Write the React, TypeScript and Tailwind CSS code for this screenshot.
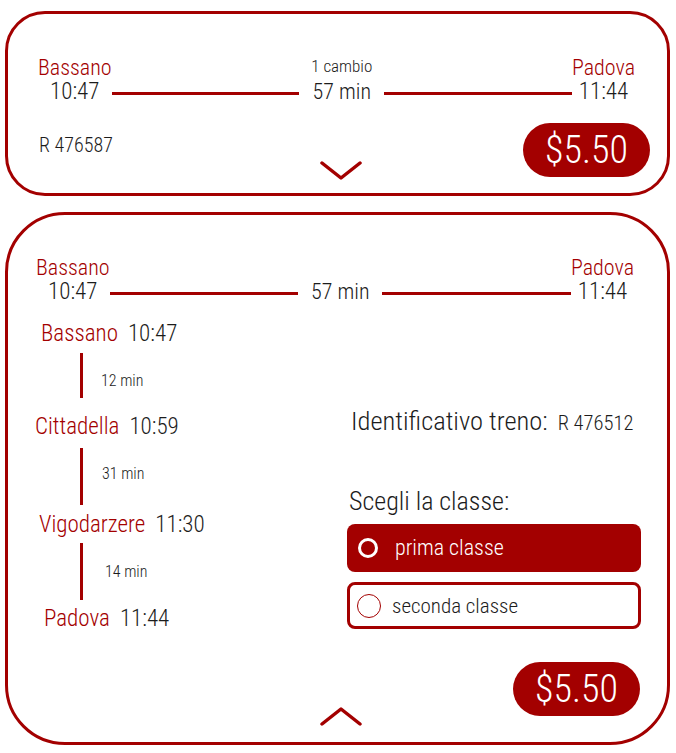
import React from 'react';

const stops = [
  { name: 'Bassano', time: '10:47', ml: 'ml-[33px]' },
  { name: 'Cittadella', time: '10:59', ml: 'ml-[27px]' },
  { name: 'Vigodarzere', time: '11:30', ml: 'ml-[31px]' },
  { name: 'Padova', time: '11:44', ml: 'ml-[36px]' },
];

const legs = [
  { label: '12 min', h: 'h-[69px]', lineTop: 'mt-[7px]', lineH: 'h-[45px]', labelMl: 'ml-[18px]' },
  { label: '31 min', h: 'h-[74px]', lineTop: 'mt-[9px]', lineH: 'h-[57px]', labelMl: 'ml-[19px]' },
  { label: '14 min', h: 'h-[70px]', lineTop: 'mt-[6px]', lineH: 'h-[57px]', labelMl: 'ml-[22px]' },
];

function Chevron({ up }: { up?: boolean }) {
  return (
    <svg width="44" height="20" viewBox="0 0 44 20" fill="none">
      <polyline
        points={up ? '3,18 22,3 41,18' : '3,2 22,17 41,2'}
        stroke="#a30000"
        strokeWidth="3.5"
        strokeLinecap="round"
        strokeLinejoin="round"
      />
    </svg>
  );
}

function Endpoint({ name, time }: { name: string; time: string }) {
  return (
    <div className="flex flex-col items-center">
      <span className="text-[22px] leading-[24px] text-[#a30000]">{name}</span>
      <span className="text-[23px] leading-[24px] text-[#1c1c1c]">{time}</span>
    </div>
  );
}

function Price() {
  return (
    <div className="w-[127px] h-[54px] rounded-full bg-[#a30000] flex items-center justify-center">
      <span className="text-[38px] leading-[44px] text-white">$5.50</span>
    </div>
  );
}

export default function App() {
  return (
    <div className="min-h-screen bg-white pt-[11px] pl-[5px] pr-[6px] font-['Roboto',sans-serif] font-[350] [font-stretch:75%] whitespace-nowrap">
      {/* riepilogo chiuso */}
      <div className="h-[185px] rounded-[40px] border-[3px] border-[#a30000] pt-[42px] pb-[12px] flex flex-col">
        <div className="flex items-end pl-[30px] pr-[32px]">
          <Endpoint name="Bassano" time="10:47" />
          <div className="flex-1 h-[3px] bg-[#a30000] mb-[9px]" />
          <div className="flex flex-col items-center mx-[12px]">
            <span className="text-[17px] leading-[20px] mb-[4px] text-[#1c1c1c]">1 cambio</span>
            <span className="text-[22px] leading-[24px] text-[#1c1c1c]">57 min</span>
          </div>
          <div className="flex-1 h-[3px] bg-[#a30000] mb-[9px]" />
          <Endpoint name="Padova" time="11:44" />
        </div>
        <div className="mt-auto grid grid-cols-[1fr_auto_1fr] h-[58px] pl-[31px] pr-[17px]">
          <span className="mt-[10px] text-[20px] leading-[24px] text-[#1c1c1c]">R 476587</span>
          <div className="self-end mr-[7px]">
            <Chevron />
          </div>
          <div className="justify-self-end">
            <Price />
          </div>
        </div>
      </div>

      {/* dettaglio aperto */}
      <div className="mt-[16px] h-[533px] rounded-[60px] border-[3px] border-[#a30000] pt-[41px] pb-[16px] flex flex-col">
        <div className="flex items-end pl-[28px] pr-[33px]">
          <Endpoint name="Bassano" time="10:47" />
          <div className="flex-1 h-[3px] bg-[#a30000] mb-[9px]" />
          <span className="mx-[13px] text-[22px] leading-[24px] text-[#1c1c1c]">57 min</span>
          <div className="flex-1 h-[3px] bg-[#a30000] mb-[9px]" />
          <Endpoint name="Padova" time="11:44" />
        </div>

        <div className="flex">
          <div className="w-[339px] pt-[18px] flex flex-col">
            {stops.map((s, i) => (
              <React.Fragment key={s.name}>
                <div className={`flex items-baseline gap-[10px] ${s.ml}`}>
                  <span className="text-[23px] leading-[24px] text-[#a30000]">{s.name}</span>
                  <span className="text-[23px] leading-[24px] text-[#1c1c1c]">{s.time}</span>
                </div>
                {legs[i] && (
                  <div className={`flex items-start ${legs[i].h}`}>
                    <div className={`ml-[72px] w-[3px] bg-[#a30000] ${legs[i].lineTop} ${legs[i].lineH}`} />
                    <span className={`mt-[25px] text-[16px] leading-[20px] text-[#1c1c1c] ${legs[i].labelMl}`}>
                      {legs[i].label}
                    </span>
                  </div>
                )}
              </React.Fragment>
            ))}
          </div>

          <div className="w-[294px] flex flex-col">
            <div className="mt-[102px] pl-[4px] flex items-baseline gap-[10px] text-[#1c1c1c]">
              <span className="text-[26.5px] leading-[30px]">Identificativo treno:</span>
              <span className="text-[20.5px] leading-[24px]">R 476512</span>
            </div>
            <span className="mt-[50px] pl-[2px] text-[26px] leading-[30px] text-[#1c1c1c]">Scegli la classe:</span>
            <div className="mt-[8px] h-[48px] rounded-[8px] bg-[#a30000] flex items-center pl-[11px] gap-[17px]">
              <div className="w-[20px] h-[20px] rounded-full border-[3px] border-white" />
              <span className="text-[22px] leading-[26px] text-white">prima classe</span>
            </div>
            <div className="mt-[10px] h-[47px] rounded-[8px] border-[3px] border-[#a30000] bg-white flex items-center pl-[7px] gap-[11px]">
              <div className="w-[24px] h-[24px] rounded-full border-[1.5px] border-[#a30000]" />
              <span className="text-[21px] leading-[26px] text-[#1c1c1c]">seconda classe</span>
            </div>
          </div>
        </div>

        <div className="mt-auto grid grid-cols-[1fr_auto_1fr] h-[64px] pl-[28px] pr-[27px]">
          <div />
          <div className="self-end ml-[6px]">
            <Chevron up />
          </div>
          <div className="justify-self-end">
            <Price />
          </div>
        </div>
      </div>
    </div>
  );
}
